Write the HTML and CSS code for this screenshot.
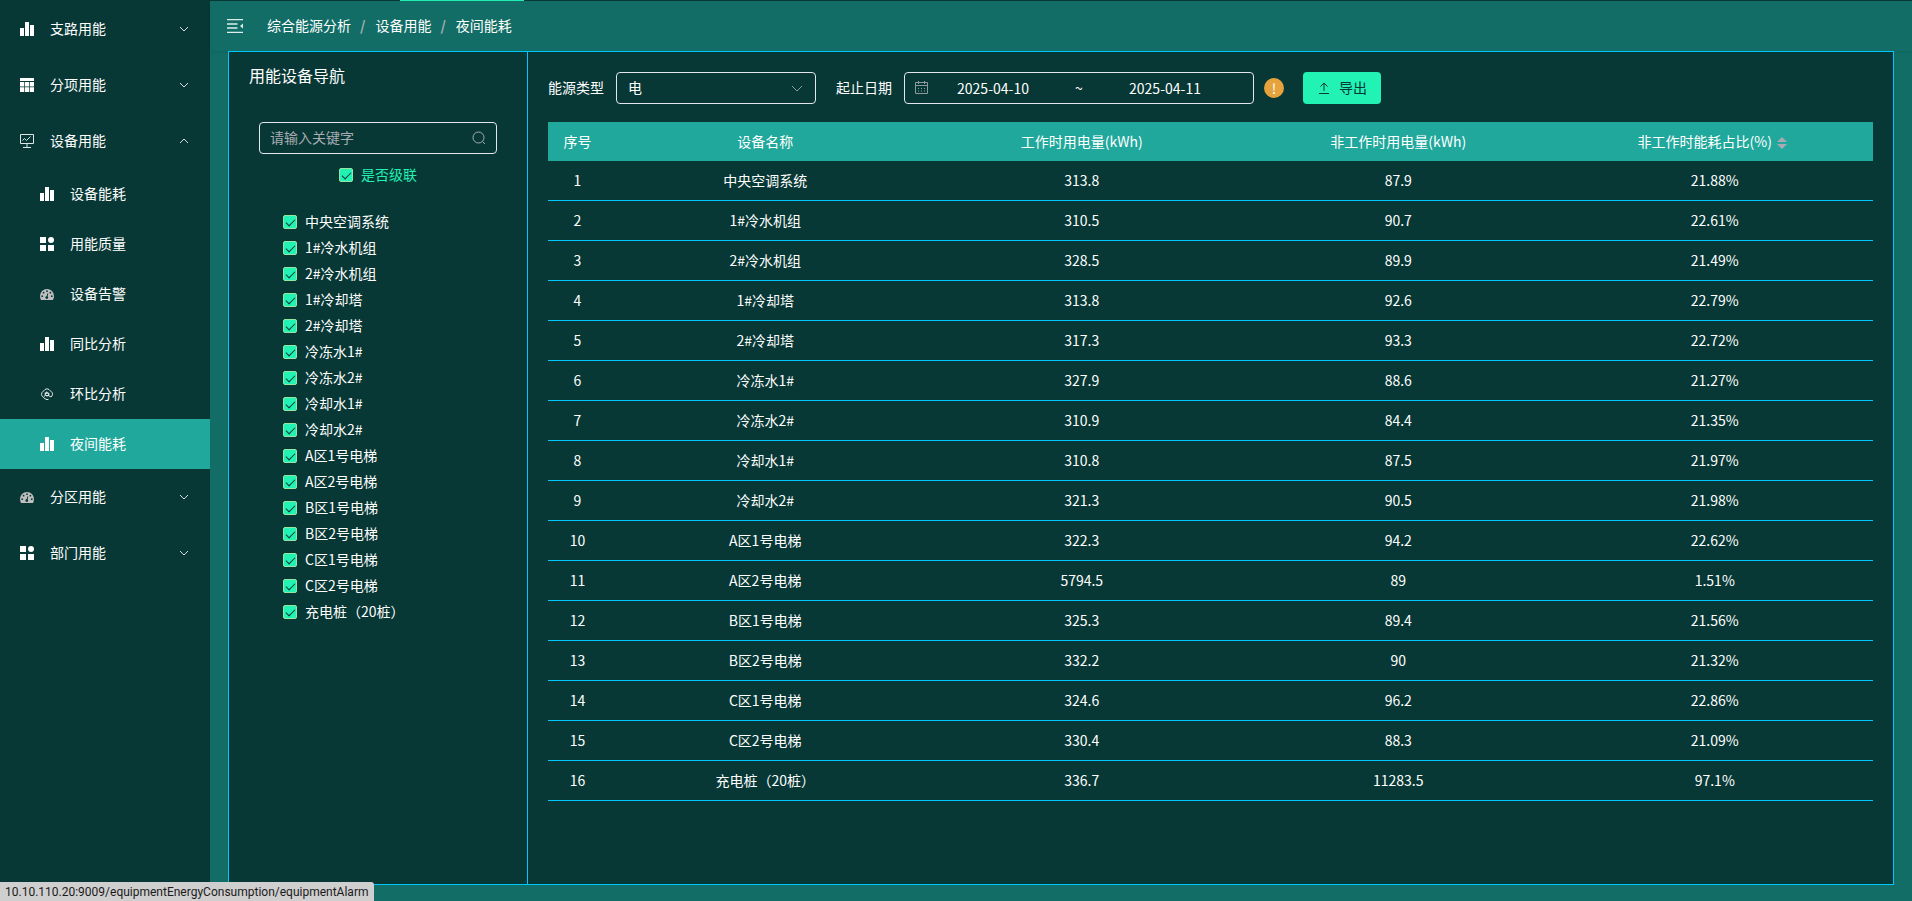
FILE: index.html
```html
<!DOCTYPE html>
<html lang="zh-CN">
<head>
    <meta charset="UTF-8">
    <meta name="viewport" content="width=device-width, initial-scale=1.0">
    <title>夜间能耗</title>
    <link rel="stylesheet" href="styles.css">
</head>
<body>
    <!-- 图标 -->
    <svg class="sprite" aria-hidden="true">
        <symbol id="i-chart" viewBox="0 0 14 14">
            <path d="M0 6h4v8H0zM5 0h4v14H5zM10 3h4v11h-4z" fill="#fff"/>
        </symbol>
        <symbol id="i-table" viewBox="0 0 14 14">
            <path d="M0 0h14v3H0z" fill="#fff"/>
            <path d="M0 4h4v4.600H0zM4.700 4h4.600v4.600H4.700zM10 4h4v4.600h-4zM0 9.300h4V14H0zM4.700 9.300h4.600V14H4.700zM10 9.300h4V14h-4z" fill="#fff"/>
        </symbol>
        <symbol id="i-monitor" viewBox="0 0 14 14">
            <path d="M.5 .5h13v9H.5zM7 9.500v4M3 13.500h8M2.500 6.500l2-2 2 2 4-4" fill="none" stroke="#dfe6e6"/>
        </symbol>
        <symbol id="i-block" viewBox="0 0 14 14">
            <path d="M0 0h6v6H0zM0 8h6v6H0zM8 8h6v6H8z" fill="#fff"/>
            <circle cx="11" cy="3" r="3" fill="#fff"/>
        </symbol>
        <symbol id="i-gauge" viewBox="0 0 14 14">
            <path d="M0 9a7 7 0 0 1 14 0c0 1.500-.4 2.800-1 4H1c-.6-1.200-1-2.500-1-4z" fill="#bfbfbf"/>
            <g fill="#073835">
                <circle cx="2.200" cy="9.200" r=".9"/>
                <circle cx="3.600" cy="5.700" r=".9"/>
                <circle cx="7" cy="4.200" r=".9"/>
                <circle cx="10.400" cy="5.700" r=".9"/>
                <circle cx="11.800" cy="9.200" r=".9"/>
                <circle cx="6.800" cy="10.600" r="1.400"/>
            </g>
            <path d="M6.800 10.500l1-4" stroke="#073835" fill="none"/>
        </symbol>
        <symbol id="i-loop" viewBox="0 0 14 14">
            <g fill="none" stroke="#dfe6e6">
                <path d="M8.500 12.300L7 12.600 5 11.800 1.900 8.800Q1 7.500 1.900 5.700L5 2.500Q7 1 9 2.500l3.200 3.200Q13 7.500 12 9l-1 .8-1.800-.6"/>
                <path d="M4.500 6.200h4.300v3M6.700 4.500L4.500 9.500M6 8.500h3"/>
                <circle cx="7" cy="7.300" r="1.700"/>
            </g>
        </symbol>
        <symbol id="i-down" viewBox="0 0 12 12">
            <path d="M2 4l4 4 4-4" fill="none" stroke="currentColor"/>
        </symbol>
        <symbol id="i-up" viewBox="0 0 12 12">
            <path d="M2 8l4-4 4 4" fill="none" stroke="currentColor"/>
        </symbol>
    </svg>

    <div class="app">
        <!-- 侧边菜单 -->
        <nav class="sidebar">
            <ul class="menu">
                <li><button type="button" class="menu-item"><svg class="icon"><use href="#i-chart"/></svg><span>支路用能</span><svg class="arrow"><use href="#i-down"/></svg></button></li>
                <li><button type="button" class="menu-item"><svg class="icon"><use href="#i-table"/></svg><span>分项用能</span><svg class="arrow"><use href="#i-down"/></svg></button></li>
                <li>
                    <button type="button" class="menu-item" aria-expanded="true"><svg class="icon"><use href="#i-monitor"/></svg><span>设备用能</span><svg class="arrow"><use href="#i-up"/></svg></button>
                    <ul class="submenu">
                        <li><a href="#" class="sub-item"><svg class="icon"><use href="#i-chart"/></svg><span>设备能耗</span></a></li>
                        <li><a href="#" class="sub-item"><svg class="icon"><use href="#i-block"/></svg><span>用能质量</span></a></li>
                        <li><a href="#" class="sub-item"><svg class="icon"><use href="#i-gauge"/></svg><span>设备告警</span></a></li>
                        <li><a href="#" class="sub-item"><svg class="icon"><use href="#i-chart"/></svg><span>同比分析</span></a></li>
                        <li><a href="#" class="sub-item"><svg class="icon"><use href="#i-loop"/></svg><span>环比分析</span></a></li>
                        <li><a href="#" class="sub-item active"><svg class="icon"><use href="#i-chart"/></svg><span>夜间能耗</span></a></li>
                    </ul>
                </li>
                <li><button type="button" class="menu-item"><svg class="icon"><use href="#i-gauge"/></svg><span>分区用能</span><svg class="arrow"><use href="#i-down"/></svg></button></li>
                <li><button type="button" class="menu-item"><svg class="icon"><use href="#i-block"/></svg><span>部门用能</span><svg class="arrow"><use href="#i-down"/></svg></button></li>
            </ul>
        </nav>

        <div class="main">
            <div class="top-strip"><div class="top-active"></div></div>
            <header class="navbar">
                <button type="button" class="hamburger" aria-label="收起菜单">
                    <svg width="16" height="14" viewBox="0 0 16 14"><path d="M0 .5h16M0 5h10.500M0 9h10.500M0 13.500h16" stroke="#dfeeec" stroke-width="1.500"/><path d="M16 4.500v5L13 7z" fill="#dfeeec"/></svg>
                </button>
                <div class="breadcrumb">
                    <a href="#">综合能源分析</a><span class="sep">/</span><a href="#">设备用能</a><span class="sep">/</span><span>夜间能耗</span>
                </div>
            </header>

            <div class="panel">
                <!-- 设备导航 -->
                <aside class="device-nav">
                    <h2>用能设备导航</h2>
                    <div class="search">
                        <input type="text" placeholder="请输入关键字" aria-label="关键字">
                        <svg width="14" height="14" viewBox="0 0 14 14"><circle cx="6.500" cy="6.500" r="5.500" fill="none" stroke="#a8adb5"/><path d="M10.500 10.500l2.500 2.500" stroke="#a8adb5"/></svg>
                    </div>
                    <label class="check cascade"><input type="checkbox" checked><span>是否级联</span></label>
                    <div class="tree">
                        <label class="check"><input type="checkbox" checked><span>中央空调系统</span></label>
                        <label class="check"><input type="checkbox" checked><span>1#冷水机组</span></label>
                        <label class="check"><input type="checkbox" checked><span>2#冷水机组</span></label>
                        <label class="check"><input type="checkbox" checked><span>1#冷却塔</span></label>
                        <label class="check"><input type="checkbox" checked><span>2#冷却塔</span></label>
                        <label class="check"><input type="checkbox" checked><span>冷冻水1#</span></label>
                        <label class="check"><input type="checkbox" checked><span>冷冻水2#</span></label>
                        <label class="check"><input type="checkbox" checked><span>冷却水1#</span></label>
                        <label class="check"><input type="checkbox" checked><span>冷却水2#</span></label>
                        <label class="check"><input type="checkbox" checked><span>A区1号电梯</span></label>
                        <label class="check"><input type="checkbox" checked><span>A区2号电梯</span></label>
                        <label class="check"><input type="checkbox" checked><span>B区1号电梯</span></label>
                        <label class="check"><input type="checkbox" checked><span>B区2号电梯</span></label>
                        <label class="check"><input type="checkbox" checked><span>C区1号电梯</span></label>
                        <label class="check"><input type="checkbox" checked><span>C区2号电梯</span></label>
                        <label class="check"><input type="checkbox" checked><span>充电桩（20桩）</span></label>
                    </div>
                </aside>

                <section class="content">
                    <!-- 查询条件 -->
                    <form class="filters">
                        <label for="energyType">能源类型</label>
                        <div class="select-box">
                            <select id="energyType"><option>电</option></select>
                            <svg width="14" height="14" viewBox="0 0 14 14"><path d="M2 5l5 5 5-5" fill="none" stroke="#8b9a9c"/></svg>
                        </div>
                        <label for="startDate">起止日期</label>
                        <div class="date-range">
                            <svg width="14" height="14" viewBox="0 0 14 14"><path d="M.5 1.500h12v11H.5zM.5 4.500h12M3.500 0v3M9.500 0v3M3 7.500h1M6 7.500h1M9 7.500h1M3 10h1M6 10h1M9 10h1" fill="none" stroke="#8b9a9c"/></svg>
                            <input type="text" id="startDate" value="2025-04-10">
                            <span>~</span>
                            <input type="text" id="endDate" value="2025-04-11" aria-label="结束日期">
                        </div>
                        <span class="warn">!</span>
                        <button type="button" class="btn-export">
                            <svg width="14" height="14" viewBox="0 0 14 14"><path d="M2 12.500h10M7 10V2M3.500 5.500L7 2l3.500 3.500" fill="none" stroke="#073835"/></svg><span>导出</span>
                        </button>
                    </form>

                    <table class="data-table">
                        <thead>
                            <tr>
                                <th class="col-no">序号</th>
                                <th>设备名称</th>
                                <th>工作时用电量(kWh)</th>
                                <th>非工作时用电量(kWh)</th>
                                <th>非工作时能耗占比(%)<svg class="sort" viewBox="0 0 10 12"><path d="M0 5l5-5 5 5zM0 7h10l-5 5z" fill="#a8abb2"/></svg></th>
                            </tr>
                        </thead>
                        <tbody>
                            <tr><td>1</td><td>中央空调系统</td><td>313.8</td><td>87.9</td><td>21.88%</td></tr>
                            <tr><td>2</td><td>1#冷水机组</td><td>310.5</td><td>90.7</td><td>22.61%</td></tr>
                            <tr><td>3</td><td>2#冷水机组</td><td>328.5</td><td>89.9</td><td>21.49%</td></tr>
                            <tr><td>4</td><td>1#冷却塔</td><td>313.8</td><td>92.6</td><td>22.79%</td></tr>
                            <tr><td>5</td><td>2#冷却塔</td><td>317.3</td><td>93.3</td><td>22.72%</td></tr>
                            <tr><td>6</td><td>冷冻水1#</td><td>327.9</td><td>88.6</td><td>21.27%</td></tr>
                            <tr><td>7</td><td>冷冻水2#</td><td>310.9</td><td>84.4</td><td>21.35%</td></tr>
                            <tr><td>8</td><td>冷却水1#</td><td>310.8</td><td>87.5</td><td>21.97%</td></tr>
                            <tr><td>9</td><td>冷却水2#</td><td>321.3</td><td>90.5</td><td>21.98%</td></tr>
                            <tr><td>10</td><td>A区1号电梯</td><td>322.3</td><td>94.2</td><td>22.62%</td></tr>
                            <tr><td>11</td><td>A区2号电梯</td><td>5794.5</td><td>89</td><td>1.51%</td></tr>
                            <tr><td>12</td><td>B区1号电梯</td><td>325.3</td><td>89.4</td><td>21.56%</td></tr>
                            <tr><td>13</td><td>B区2号电梯</td><td>332.2</td><td>90</td><td>21.32%</td></tr>
                            <tr><td>14</td><td>C区1号电梯</td><td>324.6</td><td>96.2</td><td>22.86%</td></tr>
                            <tr><td>15</td><td>C区2号电梯</td><td>330.4</td><td>88.3</td><td>21.09%</td></tr>
                            <tr><td>16</td><td>充电桩（20桩）</td><td>336.7</td><td>11283.5</td><td>97.1%</td></tr>
                        </tbody>
                    </table>
                </section>
            </div>
        </div>
    </div>

    <div class="status-url">10.10.110.20:9009/equipmentEnergyConsumption/equipmentAlarm</div>
</body>
</html>
```

FILE: styles.css
```css
* {
    box-sizing: border-box;
}

body {
    margin: 0;
    font-family: "Noto Sans CJK SC", "Noto Sans", sans-serif;
    font-size: 14px;
    line-height: 20px;
    color: #ffffff;
    background-color: #073835;
}

button, input, select {
    font: inherit;
    color: inherit;
    background: none;
    border: none;
    margin: 0;
    padding: 0;
    outline: none;
}

a {
    color: inherit;
    text-decoration: none;
}

ul {
    list-style: none;
    margin: 0;
    padding: 0;
}

.sprite {
    display: none;
}

.app {
    display: flex;
    min-height: 100vh;
}

/* 侧边菜单 */
.sidebar {
    flex: none;
    width: 210px;
    padding-top: 1px;
    background-color: #073835;
}

.menu-item, .sub-item {
    display: flex;
    align-items: center;
    gap: 16px;
    width: 100%;
    padding: 0 20px;
    text-align: left;
    cursor: pointer;
}

.menu-item {
    height: 56px;
}

.sub-item {
    height: 50px;
    padding-left: 40px;
}

.menu-item span, .sub-item span, .check span, .btn-export span, .breadcrumb, .filters label {
    padding-bottom: 2px;
}

.sub-item.active {
    background-color: #20a89c;
}

.icon {
    flex: none;
    width: 14px;
    height: 14px;
}

.arrow {
    width: 12px;
    height: 12px;
    margin-left: auto;
    color: #d5dfde;
}

/* 顶部 */
.main {
    flex: 1;
    min-width: 0;
    display: flex;
    flex-direction: column;
    background-color: #116d65;
}

.top-strip {
    height: 1px;
    padding-left: 190px;
    background-color: #073835;
}

.top-active {
    width: 124px;
    height: 1px;
    background-color: #22f2b4;
}

.navbar {
    display: flex;
    align-items: center;
    gap: 24px;
    height: 50px;
    padding: 0 17px;
    box-shadow: 0 1px 4px rgba(0, 21, 41, 0.08);
}

.hamburger {
    display: flex;
    cursor: pointer;
}

.breadcrumb .sep {
    margin: 0 10px 0 9px;
    color: #a8abb2;
    font-weight: bold;
}

.panel {
    flex: 1;
    display: flex;
    margin: 0 18px 16px;
    border: 1px solid #00c8ff;
    background-color: #073835;
}

/* 设备导航 */
.device-nav {
    flex: none;
    width: 299px;
    padding: 11px 30px 20px;
    border-right: 1px solid #00c8ff;
}

.device-nav h2 {
    margin: 0 -10px 35px;
    font-size: 16px;
    font-weight: normal;
    line-height: 24px;
}

.search {
    display: flex;
    align-items: center;
    height: 32px;
    padding: 0 10px;
    border: 1px solid #e4e7ed;
    border-radius: 4px;
}

.search input {
    flex: 1;
    min-width: 0;
    padding-bottom: 2px;
}

.search input::placeholder {
    color: #a8abb2;
    opacity: 1;
}

.check {
    display: flex;
    align-items: center;
    gap: 8px;
    height: 26px;
    cursor: pointer;
}

.check input {
    appearance: none;
    width: 14px;
    height: 14px;
    border: 1px solid #95e6a0;
    border-radius: 2px;
    background-color: #22f2b4;
    display: grid;
    place-items: center;
}

.check input:checked::before {
    content: "";
    box-sizing: border-box;
    width: 9px;
    height: 5px;
    margin-bottom: 2px;
    border-left: 1px solid #073835;
    border-bottom: 1px solid #073835;
    transform: rotate(-45deg);
}

.cascade {
    justify-content: center;
    margin-top: 8px;
    color: #22f2b4;
}

.tree {
    margin-top: 21px;
    padding-left: 24px;
}

/* 查询条件 */
.content {
    flex: 1;
    min-width: 0;
    padding: 20px;
}

.filters {
    display: flex;
    align-items: center;
    margin-bottom: 18px;
}

.filters label {
    margin-right: 12px;
}

.select-box, .date-range {
    display: flex;
    align-items: center;
    height: 32px;
    border: 1px solid #e4e7ed;
    border-radius: 4px;
}

.select-box {
    width: 200px;
    margin-right: 20px;
    padding-right: 11px;
}

.select-box select {
    appearance: none;
    flex: 1;
    height: 30px;
    padding: 0 0 2px 11px;
}

.date-range {
    width: 350px;
    margin-right: 10px;
    padding: 0 24px 0 10px;
}

.date-range input {
    flex: 1;
    min-width: 0;
    text-align: center;
}

.date-range span {
    width: 44px;
    text-align: center;
}

.warn {
    width: 20px;
    height: 20px;
    margin-right: 19px;
    border-radius: 50%;
    background-color: #e6a23c;
    text-align: center;
}

.btn-export {
    display: flex;
    align-items: center;
    gap: 8px;
    height: 32px;
    padding: 0 14px;
    border-radius: 4px;
    background-color: #22f2b4;
    color: #073835;
    cursor: pointer;
}

/* 数据表格 */
.data-table {
    width: 100%;
    table-layout: fixed;
    border-collapse: separate;
    border-spacing: 0;
}

.data-table th, .data-table td {
    padding: 0 0 2px;
    text-align: center;
    font-weight: normal;
}

.data-table th {
    height: 39px;
    background-color: #20a89c;
}

.data-table td {
    height: 40px;
    border-bottom: 1px solid #00c8ff;
}

.data-table .col-no {
    width: 59px;
}

.sort {
    width: 10px;
    height: 12px;
    margin: 0 5px;
    vertical-align: -2px;
}

/* 链接地址提示 */
.status-url {
    position: fixed;
    left: 0;
    bottom: 0;
    height: 19px;
    padding: 0 6px 0 5px;
    border-radius: 0 3px 0 0;
    background-color: #cfcfcf;
    color: #1b1b1b;
    font-family: Roboto, sans-serif;
    font-size: 12px;
    line-height: 20px;
}
```
